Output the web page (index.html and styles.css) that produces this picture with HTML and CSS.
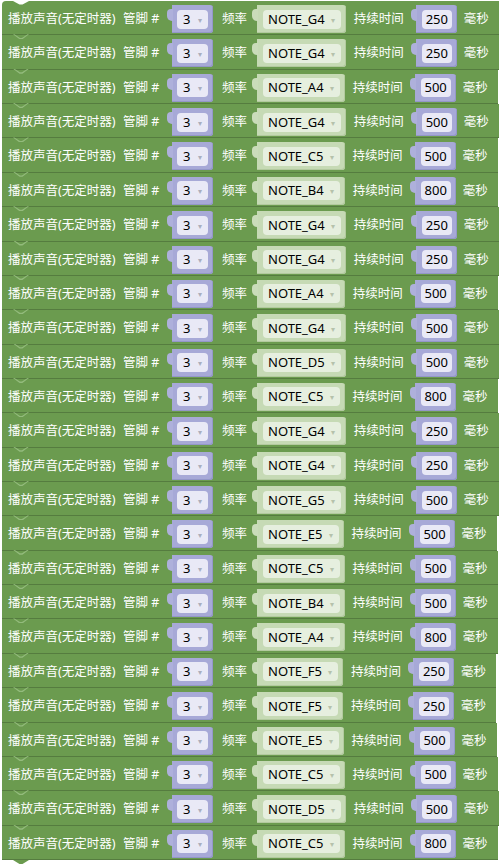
FILE: index.html
```html
<!DOCTYPE html>
<html lang="zh-CN">
<head>
<meta charset="utf-8">
<title>播放声音</title>
<link rel="stylesheet" href="styles.css">
</head>
<body>
<div class="workspace">
  <div class="stack">
    <div class="block first"><span class="label play">播放声音(无定时器)</span><span class="label pin">管脚 #</span><span class="shadow pinval"><span class="field">3<i class="arrow">▾</i></span></span><span class="label freq">频率</span><span class="shadow note"><span class="field">NOTE_G4<i class="arrow">▾</i></span></span><span class="label dur">持续时间</span><span class="shadow num"><span class="field">250</span></span><span class="label ms">毫秒</span></div>
    <div class="block"><span class="label play">播放声音(无定时器)</span><span class="label pin">管脚 #</span><span class="shadow pinval"><span class="field">3<i class="arrow">▾</i></span></span><span class="label freq">频率</span><span class="shadow note"><span class="field">NOTE_G4<i class="arrow">▾</i></span></span><span class="label dur">持续时间</span><span class="shadow num"><span class="field">250</span></span><span class="label ms">毫秒</span></div>
    <div class="block"><span class="label play">播放声音(无定时器)</span><span class="label pin">管脚 #</span><span class="shadow pinval"><span class="field">3<i class="arrow">▾</i></span></span><span class="label freq">频率</span><span class="shadow note"><span class="field">NOTE_A4<i class="arrow">▾</i></span></span><span class="label dur">持续时间</span><span class="shadow num"><span class="field">500</span></span><span class="label ms">毫秒</span></div>
    <div class="block"><span class="label play">播放声音(无定时器)</span><span class="label pin">管脚 #</span><span class="shadow pinval"><span class="field">3<i class="arrow">▾</i></span></span><span class="label freq">频率</span><span class="shadow note"><span class="field">NOTE_G4<i class="arrow">▾</i></span></span><span class="label dur">持续时间</span><span class="shadow num"><span class="field">500</span></span><span class="label ms">毫秒</span></div>
    <div class="block"><span class="label play">播放声音(无定时器)</span><span class="label pin">管脚 #</span><span class="shadow pinval"><span class="field">3<i class="arrow">▾</i></span></span><span class="label freq">频率</span><span class="shadow note"><span class="field">NOTE_C5<i class="arrow">▾</i></span></span><span class="label dur">持续时间</span><span class="shadow num"><span class="field">500</span></span><span class="label ms">毫秒</span></div>
    <div class="block"><span class="label play">播放声音(无定时器)</span><span class="label pin">管脚 #</span><span class="shadow pinval"><span class="field">3<i class="arrow">▾</i></span></span><span class="label freq">频率</span><span class="shadow note"><span class="field">NOTE_B4<i class="arrow">▾</i></span></span><span class="label dur">持续时间</span><span class="shadow num"><span class="field">800</span></span><span class="label ms">毫秒</span></div>
    <div class="block"><span class="label play">播放声音(无定时器)</span><span class="label pin">管脚 #</span><span class="shadow pinval"><span class="field">3<i class="arrow">▾</i></span></span><span class="label freq">频率</span><span class="shadow note"><span class="field">NOTE_G4<i class="arrow">▾</i></span></span><span class="label dur">持续时间</span><span class="shadow num"><span class="field">250</span></span><span class="label ms">毫秒</span></div>
    <div class="block"><span class="label play">播放声音(无定时器)</span><span class="label pin">管脚 #</span><span class="shadow pinval"><span class="field">3<i class="arrow">▾</i></span></span><span class="label freq">频率</span><span class="shadow note"><span class="field">NOTE_G4<i class="arrow">▾</i></span></span><span class="label dur">持续时间</span><span class="shadow num"><span class="field">250</span></span><span class="label ms">毫秒</span></div>
    <div class="block"><span class="label play">播放声音(无定时器)</span><span class="label pin">管脚 #</span><span class="shadow pinval"><span class="field">3<i class="arrow">▾</i></span></span><span class="label freq">频率</span><span class="shadow note"><span class="field">NOTE_A4<i class="arrow">▾</i></span></span><span class="label dur">持续时间</span><span class="shadow num"><span class="field">500</span></span><span class="label ms">毫秒</span></div>
    <div class="block"><span class="label play">播放声音(无定时器)</span><span class="label pin">管脚 #</span><span class="shadow pinval"><span class="field">3<i class="arrow">▾</i></span></span><span class="label freq">频率</span><span class="shadow note"><span class="field">NOTE_G4<i class="arrow">▾</i></span></span><span class="label dur">持续时间</span><span class="shadow num"><span class="field">500</span></span><span class="label ms">毫秒</span></div>
    <div class="block"><span class="label play">播放声音(无定时器)</span><span class="label pin">管脚 #</span><span class="shadow pinval"><span class="field">3<i class="arrow">▾</i></span></span><span class="label freq">频率</span><span class="shadow note"><span class="field">NOTE_D5<i class="arrow">▾</i></span></span><span class="label dur">持续时间</span><span class="shadow num"><span class="field">500</span></span><span class="label ms">毫秒</span></div>
    <div class="block"><span class="label play">播放声音(无定时器)</span><span class="label pin">管脚 #</span><span class="shadow pinval"><span class="field">3<i class="arrow">▾</i></span></span><span class="label freq">频率</span><span class="shadow note"><span class="field">NOTE_C5<i class="arrow">▾</i></span></span><span class="label dur">持续时间</span><span class="shadow num"><span class="field">800</span></span><span class="label ms">毫秒</span></div>
    <div class="block"><span class="label play">播放声音(无定时器)</span><span class="label pin">管脚 #</span><span class="shadow pinval"><span class="field">3<i class="arrow">▾</i></span></span><span class="label freq">频率</span><span class="shadow note"><span class="field">NOTE_G4<i class="arrow">▾</i></span></span><span class="label dur">持续时间</span><span class="shadow num"><span class="field">250</span></span><span class="label ms">毫秒</span></div>
    <div class="block"><span class="label play">播放声音(无定时器)</span><span class="label pin">管脚 #</span><span class="shadow pinval"><span class="field">3<i class="arrow">▾</i></span></span><span class="label freq">频率</span><span class="shadow note"><span class="field">NOTE_G4<i class="arrow">▾</i></span></span><span class="label dur">持续时间</span><span class="shadow num"><span class="field">250</span></span><span class="label ms">毫秒</span></div>
    <div class="block"><span class="label play">播放声音(无定时器)</span><span class="label pin">管脚 #</span><span class="shadow pinval"><span class="field">3<i class="arrow">▾</i></span></span><span class="label freq">频率</span><span class="shadow note"><span class="field">NOTE_G5<i class="arrow">▾</i></span></span><span class="label dur">持续时间</span><span class="shadow num"><span class="field">500</span></span><span class="label ms">毫秒</span></div>
    <div class="block"><span class="label play">播放声音(无定时器)</span><span class="label pin">管脚 #</span><span class="shadow pinval"><span class="field">3<i class="arrow">▾</i></span></span><span class="label freq">频率</span><span class="shadow note"><span class="field">NOTE_E5<i class="arrow">▾</i></span></span><span class="label dur">持续时间</span><span class="shadow num"><span class="field">500</span></span><span class="label ms">毫秒</span></div>
    <div class="block"><span class="label play">播放声音(无定时器)</span><span class="label pin">管脚 #</span><span class="shadow pinval"><span class="field">3<i class="arrow">▾</i></span></span><span class="label freq">频率</span><span class="shadow note"><span class="field">NOTE_C5<i class="arrow">▾</i></span></span><span class="label dur">持续时间</span><span class="shadow num"><span class="field">500</span></span><span class="label ms">毫秒</span></div>
    <div class="block"><span class="label play">播放声音(无定时器)</span><span class="label pin">管脚 #</span><span class="shadow pinval"><span class="field">3<i class="arrow">▾</i></span></span><span class="label freq">频率</span><span class="shadow note"><span class="field">NOTE_B4<i class="arrow">▾</i></span></span><span class="label dur">持续时间</span><span class="shadow num"><span class="field">500</span></span><span class="label ms">毫秒</span></div>
    <div class="block"><span class="label play">播放声音(无定时器)</span><span class="label pin">管脚 #</span><span class="shadow pinval"><span class="field">3<i class="arrow">▾</i></span></span><span class="label freq">频率</span><span class="shadow note"><span class="field">NOTE_A4<i class="arrow">▾</i></span></span><span class="label dur">持续时间</span><span class="shadow num"><span class="field">800</span></span><span class="label ms">毫秒</span></div>
    <div class="block"><span class="label play">播放声音(无定时器)</span><span class="label pin">管脚 #</span><span class="shadow pinval"><span class="field">3<i class="arrow">▾</i></span></span><span class="label freq">频率</span><span class="shadow note"><span class="field">NOTE_F5<i class="arrow">▾</i></span></span><span class="label dur">持续时间</span><span class="shadow num"><span class="field">250</span></span><span class="label ms">毫秒</span></div>
    <div class="block"><span class="label play">播放声音(无定时器)</span><span class="label pin">管脚 #</span><span class="shadow pinval"><span class="field">3<i class="arrow">▾</i></span></span><span class="label freq">频率</span><span class="shadow note"><span class="field">NOTE_F5<i class="arrow">▾</i></span></span><span class="label dur">持续时间</span><span class="shadow num"><span class="field">250</span></span><span class="label ms">毫秒</span></div>
    <div class="block"><span class="label play">播放声音(无定时器)</span><span class="label pin">管脚 #</span><span class="shadow pinval"><span class="field">3<i class="arrow">▾</i></span></span><span class="label freq">频率</span><span class="shadow note"><span class="field">NOTE_E5<i class="arrow">▾</i></span></span><span class="label dur">持续时间</span><span class="shadow num"><span class="field">500</span></span><span class="label ms">毫秒</span></div>
    <div class="block"><span class="label play">播放声音(无定时器)</span><span class="label pin">管脚 #</span><span class="shadow pinval"><span class="field">3<i class="arrow">▾</i></span></span><span class="label freq">频率</span><span class="shadow note"><span class="field">NOTE_C5<i class="arrow">▾</i></span></span><span class="label dur">持续时间</span><span class="shadow num"><span class="field">500</span></span><span class="label ms">毫秒</span></div>
    <div class="block"><span class="label play">播放声音(无定时器)</span><span class="label pin">管脚 #</span><span class="shadow pinval"><span class="field">3<i class="arrow">▾</i></span></span><span class="label freq">频率</span><span class="shadow note"><span class="field">NOTE_D5<i class="arrow">▾</i></span></span><span class="label dur">持续时间</span><span class="shadow num"><span class="field">500</span></span><span class="label ms">毫秒</span></div>
    <div class="block last"><span class="label play">播放声音(无定时器)</span><span class="label pin">管脚 #</span><span class="shadow pinval"><span class="field">3<i class="arrow">▾</i></span></span><span class="label freq">频率</span><span class="shadow note"><span class="field">NOTE_C5<i class="arrow">▾</i></span></span><span class="label dur">持续时间</span><span class="shadow num"><span class="field">800</span></span><span class="label ms">毫秒</span></div>
  </div>
</div>
</body>
</html>
```
FILE: styles.css
```css
html, body {
  margin: 0;
  padding: 0;
  background: #ffffff;
  overflow: hidden;
}

.workspace {
  width: 500px;
  height: 864px;
  overflow: hidden;
  padding: 1px 0 0 2px;
  box-sizing: border-box;
  font-family: "Noto Sans", "Noto Sans CJK SC", sans-serif;
}

.stack {
  display: flex;
  flex-direction: column;
  align-items: flex-start;
}

/* one statement block of the stack */
.block {
  position: relative;
  display: flex;
  align-items: flex-start;
  box-sizing: border-box;
  height: 34.36px;
  padding: 4px 10px 0 6px;
  background: #6b9b4f;
  border-bottom: 1px solid #557c3f;
  white-space: nowrap;
  flex-shrink: 0;
}

/* highlight of the previous-connection notch */
.block::before {
  content: "";
  position: absolute;
  top: -1px;
  left: 11px;
  width: 16px;
  height: 5px;
  background: #93bb7c;
  clip-path: polygon(0 0, 1.4px 0, 7px 3.6px, 9px 3.6px, 14.6px 0, 16px 0, 9.4px 5px, 6.6px 5px);
}

.block.first {
  border-top-left-radius: 4px;
}

/* notch cut into the top of the first block */
.block.first::before {
  top: 0;
  background: #ffffff;
  clip-path: polygon(0 0, 16px 0, 9.5px 3.5px, 6.5px 3.5px);
}

/* next-connection tab under the last block */
.block.last::after {
  content: "";
  position: absolute;
  top: 100%;
  left: 11px;
  width: 16px;
  height: 5px;
  margin-top: 1px;
  background: #6b9b4f;
  clip-path: polygon(0 0, 16px 0, 9.5px 4px, 6.5px 4px);
}

.label {
  color: #ffffff;
  font-size: 12.5px;
  line-height: 28px;
  flex-shrink: 0;
}

.label.play { width: 115px; }
.label.pin  { width: 44px; }
.label.freq { width: 30px; margin-left: 9px; }
.label.dur  { width: 57px; margin-left: 8px; }
.label.ms   { margin-left: 7px; }

/* shadow value blocks plugged into the inputs */
.shadow {
  position: relative;
  display: flex;
  align-items: center;
  box-sizing: border-box;
  height: 28px;
  margin-left: 5px;
  border-radius: 0 3px 3px 0;
  flex-shrink: 0;
}

/* output tab on the left edge of a value block */
.shadow::before {
  content: "";
  position: absolute;
  left: -5px;
  top: 4px;
  width: 6px;
  height: 12px;
  border-radius: 4px 0 0 5px;
}

.shadow.pinval,
.shadow.num {
  background: #a7a9d7;
  box-shadow: inset -1px -1px 0 #9497c8;
}

.shadow.pinval::before,
.shadow.num::before {
  background: #aeb0db;
}

.shadow.pinval {
  width: 41px;
  padding: 0 5px 0 5px;
}

.shadow.num {
  width: 41px;
  padding: 0 5px 0 6px;
}

.shadow.note {
  background: #c6dab5;
  box-shadow: inset -1px -1px 0 #b3ca9f;
  padding: 0 5px 0 6px;
}

.shadow.note::before {
  background: #cadcba;
}

.field {
  display: flex;
  align-items: center;
  box-sizing: border-box;
  height: 19px;
  border-radius: 4px;
  color: #000000;
  font-size: 13px;
  line-height: 19px;
}

.pinval .field {
  width: 31px;
  padding-left: 6px;
  background: #e9e9f6;
}

.num .field {
  width: 30px;
  justify-content: center;
  background: #e9e9f6;
}

.note .field {
  padding: 0 0 0 5px;
  background: #e6efdf;
}

.arrow {
  font-style: normal;
  font-size: 8px;
  color: #a9aebd;
  margin-left: 8px;
}

.note .arrow {
  margin-left: 6px;
  width: 10px;
  color: #b5c2ab;
}
```
